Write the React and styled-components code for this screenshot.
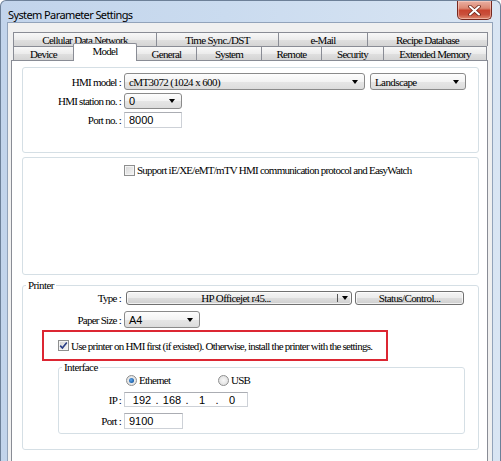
import React from 'react';
import styled, { createGlobalStyle } from 'styled-components';

const SERIF = `"Liberation Serif", "Times New Roman", serif`;
const SANS = `"Liberation Sans", Arial, sans-serif`;

const Global = createGlobalStyle`
  html, body { margin: 0; padding: 0; background: #fff; }
  body { width: 501px; height: 461px; overflow: hidden; }
  * { box-sizing: border-box; }
`;

const Window = styled.div`
  width: 501px;
  height: 461px;
  display: flex;
  flex-direction: column;
  background: linear-gradient(90deg, #c2d4eb 0%, #cadbef 45%, #d9e5f3 100%);
  border: 1px solid #6d8098;
  border-bottom: none;
  border-radius: 6px 6px 0 0;
  padding: 0 7px 0 6px;
  overflow: hidden;
`;

const TitleBar = styled.div`
  height: 21px;
  flex: none;
  display: flex;
  align-items: flex-start;
`;

const Title = styled.div`
  margin: 6px 0 0 1px;
  font: 11px/15px "Noto Sans", "Open Sans", sans-serif;
  letter-spacing: -0.6px;
  color: #000;
`;

const CloseBtn = styled.div`
  margin: 0 1px 0 auto;
  width: 35px;
  height: 19px;
  border: 1px solid #76281f;
  border-top: none;
  border-radius: 0 0 5px 5px;
  background: linear-gradient(#eab0a2 0%, #dc8873 40%, #c8442f 52%, #c9503c 75%, #de8a70 100%);
  box-shadow: inset 0 0 0 1px rgba(255, 220, 210, 0.5);
  display: flex;
  align-items: center;
  justify-content: center;
`;

const Client = styled.div`
  flex: 1;
  display: flex;
  flex-direction: column;
  background: #f0f0f0;
  border: 1px solid #92a3ba;
  border-bottom: none;
  padding: 9px 4px 0 3px;
  min-height: 0;
`;

const TabRow = styled.div`
  display: flex;
  margin-left: 2px;
  height: 14px;
  flex: none;
`;

const Tab = styled.div`
  width: ${p => p.$w}px;
  height: ${p => (p.$active ? 18 : 14)}px;
  margin-top: ${p => (p.$active ? -3 : 0)}px;
  margin-bottom: ${p => (p.$active ? -1 : 0)}px;
  margin-right: ${p => (p.$active ? -1 : 0)}px;
  border: 1px solid #898c95;
  border-right: ${p => (p.$active ? '1px solid #898c95' : 'none')};
  border-bottom: none;
  border-radius: ${p => (p.$active ? '2px 2px 0 0' : '0')};
  &:last-child { border-right: 1px solid #898c95; }
  background: ${p =>
    p.$active ? '#fff' : 'linear-gradient(#f8f8f8, #ececec 50%, #e0e0e0 51%, #d4d4d4)'};
  position: ${p => (p.$active ? 'relative' : 'static')};
  z-index: ${p => (p.$active ? 1 : 'auto')};
  display: flex;
  align-items: ${p => (p.$active ? 'flex-start' : 'center')};
  padding-top: ${p => (p.$active ? 1 : 0)}px;
  justify-content: center;
  font: 11px/12px ${SERIF};
  letter-spacing: -0.7px;
  color: #000;
  white-space: nowrap;
`;

const Panel = styled.div`
  flex: 1;
  background: #fff;
  border: 1px solid #898c95;
  border-bottom: none;
  padding: 6px 8px 0 10px;
  display: flex;
  flex-direction: column;
  gap: 4px;
  min-height: 0;
`;

const Group = styled.div`
  height: ${p => p.$h}px;
  flex: none;
  border: 1px solid #d5dfe5;
  border-radius: 3px;
  padding: ${p => p.$pad || '0'};
  display: flex;
  flex-direction: column;
`;

const FieldGroup = styled.fieldset`
  margin: 0 0 0 ${p => p.$ml || 0}px;
  width: ${p => (p.$w ? `${p.$w}px` : 'auto')};
  min-width: 0;
  border: 1px solid #d5dfe5;
  border-radius: 3px;
  padding: 0 0 ${p => p.$pb || 0}px 0;
  display: flex;
  flex-direction: column;
`;

const Legend = styled.legend`
  margin-left: 3px;
  padding: 0 2px;
  font: 11px/12px ${SERIF};
  letter-spacing: -0.6px;
  color: #000;
`;

const Row = styled.div`
  display: flex;
  align-items: center;
  height: ${p => p.$h}px;
  margin-top: ${p => p.$mt || 0}px;
  flex: none;
`;

const Label = styled.div`
  width: ${p => p.$w}px;
  margin-right: 3px;
  text-align: right;
  font: 11px/12px ${SERIF};
  letter-spacing: -0.75px;
  color: #000;
  white-space: nowrap;
`;

const Text = styled.span`
  font: 11px/12px ${SERIF};
  letter-spacing: -0.75px;
  color: #000;
  white-space: nowrap;
`;

const Combo = styled.div`
  width: ${p => p.$w}px;
  height: 100%;
  margin-left: ${p => p.$ml || 0}px;
  border: 1px solid #8a8a8a;
  border-radius: 3px;
  background: linear-gradient(#fdfdfd 0%, #f3f3f3 50%, #e6e6e6 51%, #dcdcdc 100%);
  display: flex;
  align-items: center;
  padding: 0 6px 0 4px;
  font: ${p => (p.$sans ? `11px/12px ${SANS}` : `11px/12px ${SERIF}`)};
  letter-spacing: ${p => (p.$sans ? '0' : '-0.6px')};
  color: #000;
  white-space: nowrap;
`;

const ComboText = styled.span`
  flex: 1;
`;

const Arrow = styled.span`
  width: 0;
  height: 0;
  border-left: 3.5px solid transparent;
  border-right: 3.5px solid transparent;
  border-top: 4px solid #000;
  flex: none;
`;

const Input = styled.div`
  width: ${p => p.$w}px;
  height: 100%;
  border: 1px solid #cdd1d7;
  border-top-color: #abadb3;
  background: #fff;
  display: flex;
  align-items: center;
  padding-left: ${p => p.$pl || 4}px;
  font: 11px/12px ${SANS};
  color: #000;
`;

const IpSeg = styled.span`
  width: ${p => p.$w}px;
  text-align: center;
  font: 11px/12px ${SANS};
`;

const Button = styled.div`
  width: ${p => p.$w}px;
  height: 100%;
  margin-left: ${p => p.$ml || 0}px;
  border: 1px solid #707070;
  border-radius: 3px;
  background: linear-gradient(#f4f4f4 0%, #ebebeb 50%, #dddddd 51%, #cfcfcf 100%);
  box-shadow: inset 0 0 0 1px rgba(255, 255, 255, 0.7);
  display: flex;
  align-items: center;
  justify-content: center;
  font: 11px/12px ${SERIF};
  letter-spacing: -0.6px;
  color: #000;
  white-space: nowrap;
`;

const SplitMain = styled.span`
  flex: 1;
  text-align: center;
  padding-left: 8px;
`;

const SplitSep = styled.span`
  width: 1px;
  align-self: stretch;
  margin: 2px 0;
  background: #555;
`;

const SplitArrow = styled.span`
  width: 13px;
  display: flex;
  justify-content: center;
`;

const Check = styled.span`
  width: 11px;
  height: 11px;
  flex: none;
  border: 1px solid #8e8f8f;
  background: linear-gradient(135deg, #d6d6d6, #f6f6f6);
  box-shadow: inset 0 0 0 1px #f4f4f4;
  margin-right: 2px;
  display: flex;
  align-items: center;
  justify-content: center;
`;

const Radio = styled.span`
  width: 11px;
  height: 11px;
  flex: none;
  border-radius: 50%;
  border: 1px solid #8e8f8f;
  background: radial-gradient(circle at 50% 50%, #f8f8f8 0%, #e2e2e2 70%, #d0d0d0 100%);
  margin-right: 2px;
  display: flex;
  align-items: center;
  justify-content: center;
`;

const RadioDot = styled.span`
  width: 5px;
  height: 5px;
  border-radius: 50%;
  background: radial-gradient(circle at 40% 40%, #5fa8ec 0%, #1c5fa8 70%, #0f3f78 100%);
`;

const Option = styled.div`
  display: flex;
  align-items: center;
  margin-left: ${p => p.$ml || 0}px;
  width: ${p => (p.$w ? `${p.$w}px` : 'auto')};
`;

const Highlight = styled.div`
  margin: 2px 0 0 19px;
  width: 346px;
  height: 31px;
  flex: none;
  border: 2px solid #dc2632;
  display: flex;
  align-items: center;
  padding-left: 14px;
`;

const row1 = [
  ['Cellular Data Network', 143],
  ['Time Sync./DST', 122],
  ['e-Mail', 89],
  ['Recipe Database', 121],
];

const row2 = [
  ['Device', 60],
  ['Model', 64, true],
  ['General', 60],
  ['System', 65],
  ['Remote', 60],
  ['Security', 62],
  ['Extended Memory', 104],
];

const DropCombo = ({ w, ml, sans, children }) => (
  <Combo $w={w} $ml={ml} $sans={sans}>
    <ComboText>{children}</ComboText>
    <Arrow />
  </Combo>
);

export default function App() {
  return (
    <>
      <Global />
      <Window>
        <TitleBar>
          <Title>System Parameter Settings</Title>
          <CloseBtn>
            <svg width="13" height="11" viewBox="0 0 13 11">
              <path d="M2 1.5 L11 9.5 M11 1.5 L2 9.5" stroke="#6a2418" strokeWidth="3.6" strokeLinecap="round" />
              <path d="M2 1.5 L11 9.5 M11 1.5 L2 9.5" stroke="#fff" strokeWidth="2" strokeLinecap="round" />
            </svg>
          </CloseBtn>
        </TitleBar>
        <Client>
          <TabRow>
            {row1.map(([t, w]) => (
              <Tab key={t} $w={w}>{t}</Tab>
            ))}
          </TabRow>
          <TabRow>
            {row2.map(([t, w, a]) => (
              <Tab key={t} $w={w} $active={a}>{t}</Tab>
            ))}
          </TabRow>
          <Panel>
            <Group $h={86} $pad="5px 0 0 0">
              <Row $h={17}>
                <Label $w={98}>HMI model :</Label>
                <DropCombo w={241}>cMT3072 (1024 x 600)</DropCombo>
                <DropCombo w={96} ml={5}>Landscape</DropCombo>
              </Row>
              <Row $h={16} $mt={3}>
                <Label $w={98}>HMI station no. :</Label>
                <DropCombo w={58} sans>0</DropCombo>
              </Row>
              <Row $h={16} $mt={3}>
                <Label $w={98}>Port no. :</Label>
                <Input $w={58}>8000</Input>
              </Row>
            </Group>
            <Group $h={118} $pad="6px 0 0 101px">
              <Row $h={12}>
                <Check />
                <Text>Support iE/XE/eMT/mTV HMI communication protocol and EasyWatch</Text>
              </Row>
            </Group>
            <FieldGroup $pb={15}>
              <Legend>Printer</Legend>
              <Row $h={14}>
                <Label $w={98}>Type :</Label>
                <Button $w={226} $ml={2}>
                  <SplitMain>HP Officejet r45...</SplitMain>
                  <SplitSep />
                  <SplitArrow><Arrow /></SplitArrow>
                </Button>
                <Button $w={109} $ml={3}>Status/Control...</Button>
              </Row>
              <Row $h={17} $mt={6}>
                <Label $w={98}>Paper Size :</Label>
                <DropCombo w={76} sans>A4</DropCombo>
              </Row>
              <Highlight>
                <Check>
                  <svg width="9" height="9" viewBox="0 0 9 9">
                    <path d="M1.2 4.6 L3.4 7 L7.8 1.4" fill="none" stroke="#2b3f86" strokeWidth="1.6" />
                  </svg>
                </Check>
                <Text>Use printer on HMI first (if existed). Otherwise, install the printer with the settings.</Text>
              </Highlight>
              <FieldGroup $ml={35} $w={407} $pb={4}>
                <Legend>Interface</Legend>
                <Row $h={12} $mt={1}>
                  <Option $ml={67} $w={92}>
                    <Radio><RadioDot /></Radio>
                    <Text>Ethernet</Text>
                  </Option>
                  <Option>
                    <Radio />
                    <Text>USB</Text>
                  </Option>
                </Row>
                <Row $h={15} $mt={6}>
                  <Label $w={62}>IP :</Label>
                  <Input $w={124} $pl={5}>
                    <IpSeg $w={24}>192</IpSeg>
                    <IpSeg $w={6}>.</IpSeg>
                    <IpSeg $w={24}>168</IpSeg>
                    <IpSeg $w={6}>.</IpSeg>
                    <IpSeg $w={24}>1</IpSeg>
                    <IpSeg $w={6}>.</IpSeg>
                    <IpSeg $w={24}>0</IpSeg>
                  </Input>
                </Row>
                <Row $h={16} $mt={6}>
                  <Label $w={62}>Port :</Label>
                  <Input $w={59}>9100</Input>
                </Row>
              </FieldGroup>
            </FieldGroup>
          </Panel>
        </Client>
      </Window>
    </>
  );
}
